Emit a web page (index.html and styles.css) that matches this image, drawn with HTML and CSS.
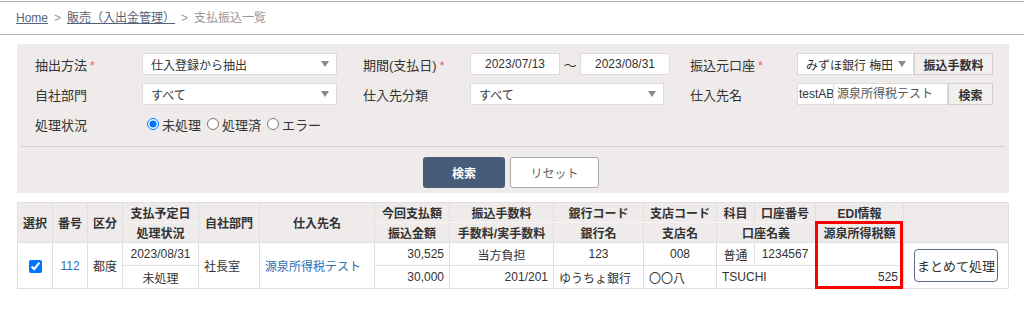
FILE: index.html
```html
<!DOCTYPE html>
<html lang="ja">
<head>
<meta charset="utf-8">
<title>支払振込一覧</title>
<link rel="stylesheet" href="styles.css">
</head>
<body>
<div class="topline"></div>
<nav class="breadcrumb">
  <a href="#">Home</a><span class="sep">&gt;</span><a href="#">販売（入出金管理）</a><span class="sep">&gt;</span><span class="current">支払振込一覧</span>
</nav>

<section class="search-panel">
  <div class="form-grid">
    <div class="lbl">抽出方法<span class="req">*</span></div>
    <div class="field"><div class="select w-main"><span class="val">仕入登録から抽出</span><i class="arrow"></i></div></div>

    <div class="lbl">期間(支払日)<span class="req">*</span></div>
    <div class="field"><div class="input date">2023/07/13</div><span class="tilde">〜</span><div class="input date">2023/08/31</div></div>

    <div class="lbl">振込元口座<span class="req">*</span></div>
    <div class="field"><div class="select bank"><span class="val">みずほ銀行 梅田支店</span><i class="arrow"></i></div><button class="btn-sm fee">振込手数料</button></div>

    <div class="lbl">自社部門</div>
    <div class="field"><div class="select w-main"><span class="val">すべて</span><i class="arrow"></i></div></div>

    <div class="lbl">仕入先分類</div>
    <div class="field"><div class="select w-cat"><span class="val">すべて</span><i class="arrow"></i></div></div>

    <div class="lbl">仕入先名</div>
    <div class="field"><div class="input code">testAB</div><div class="input name">源泉所得税テスト</div><button class="btn-sm find">検索</button></div>

    <div class="lbl">処理状況</div>
    <div class="field radios">
      <label class="radio"><input type="radio" name="st" checked>未処理</label>
      <label class="radio"><input type="radio" name="st">処理済</label>
      <label class="radio"><input type="radio" name="st">エラー</label>
    </div>
  </div>
  <div class="divider"></div>
  <div class="actions">
    <button class="btn-search">検索</button>
    <button class="btn-reset">リセット</button>
  </div>
</section>

<div class="table-wrap">
  <table class="list">
    <colgroup>
      <col class="cw35"><col class="cw35"><col class="cw35"><col class="cw76"><col class="cw61"><col class="cw115"><col class="cw75"><col class="cw104"><col class="cw90"><col class="cw73"><col class="cw38"><col class="cw61"><col class="cw88"><col class="cw105">
    </colgroup>
    <thead>
      <tr>
        <th rowspan="2">選択</th>
        <th rowspan="2">番号</th>
        <th rowspan="2">区分</th>
        <th class="top">支払予定日</th>
        <th rowspan="2">自社部門</th>
        <th rowspan="2">仕入先名</th>
        <th class="top">今回支払額</th>
        <th class="top">振込手数料</th>
        <th class="top">銀行コード</th>
        <th class="top">支店コード</th>
        <th class="top">科目</th>
        <th class="top">口座番号</th>
        <th class="top">EDI情報</th>
        <th rowspan="2"></th>
      </tr>
      <tr>
        <th>処理状況</th>
        <th>振込金額</th>
        <th>手数料/実手数料</th>
        <th>銀行名</th>
        <th>支店名</th>
        <th colspan="2">口座名義</th>
        <th>源泉所得税額</th>
      </tr>
    </thead>
    <tbody>
      <tr>
        <td rowspan="2" class="c"><input type="checkbox" checked class="chk"></td>
        <td rowspan="2" class="c"><a href="#" class="link">112</a></td>
        <td rowspan="2" class="c">都度</td>
        <td class="c">2023/08/31</td>
        <td rowspan="2">社長室</td>
        <td rowspan="2"><a href="#" class="link">源泉所得税テスト</a></td>
        <td class="r">30,525</td>
        <td class="c">当方負担</td>
        <td class="c">123</td>
        <td class="c">008</td>
        <td class="c">普通</td>
        <td class="c">1234567</td>
        <td class="r"></td>
        <td rowspan="2" class="c"><button class="btn-bulk">まとめて処理</button></td>
      </tr>
      <tr>
        <td class="c">未処理</td>
        <td class="r">30,000</td>
        <td class="r">201/201</td>
        <td>ゆうちょ銀行</td>
        <td>〇〇八</td>
        <td colspan="2">TSUCHI</td>
        <td class="r">525</td>
      </tr>
    </tbody>
  </table>
  <div class="highlight"></div>
</div>
</body>
</html>
```

FILE: styles.css
```css
* { box-sizing: border-box; }

body {
  margin: 0;
  font-family: "Liberation Sans", "Noto Sans CJK JP", sans-serif;
  font-size: 12px;
  color: #333;
  background: #fff;
}

.topline {
  height: 1px;
  margin-top: 1px;
  background: #b3b3b3;
}

.breadcrumb {
  height: 33px;
  line-height: 32px;
  padding-left: 16px;
  border-bottom: 1px solid #b3b3b3;
  font-size: 12px;
}
.breadcrumb a {
  color: #56627a;
  text-decoration: underline;
}
.breadcrumb .sep {
  color: #999;
  margin: 0 6px;
}
.breadcrumb .current { color: #999; }

/* search panel */
.search-panel {
  margin: 9px 15px 0 17px;
  background: #efebea;
  padding: 9px 0 5px;
}

.form-grid {
  display: grid;
  grid-template-columns: 107px 221px 107px 220px 107px auto;
  grid-auto-rows: 22px;
  row-gap: 8px;
  padding: 0 18px;
  align-items: center;
}

.lbl {
  font-size: 13px;
  color: #333;
  white-space: nowrap;
}
.req {
  color: #e35b5b;
  margin-left: 3px;
  font-size: 12px;
}

.field {
  display: flex;
  align-items: center;
  height: 22px;
}

.select {
  display: flex;
  align-items: center;
  height: 22px;
  border: 1px solid #dcdcdc;
  background: #fff;
  padding: 0 7px 0 8px;
  font-size: 12px;
}
.select .val {
  flex: 1;
  overflow: hidden;
  white-space: nowrap;
}
.arrow {
  width: 0;
  height: 0;
  border-left: 4px solid transparent;
  border-right: 4px solid transparent;
  border-top: 6px solid #8a8a8a;
  margin-left: 6px;
}
.w-main { width: 195px; }
.w-cat { width: 194px; }
.bank { width: 117px; }

.input {
  height: 22px;
  border: 1px solid #dcdcdc;
  background: #fff;
  line-height: 20px;
  font-size: 12px;
  white-space: nowrap;
  overflow: hidden;
}
.date { width: 90px; text-align: center; }
.tilde {
  width: 20px;
  text-align: center;
  font-size: 13px;
}
.code { width: 37px; padding-left: 1px; }
.name { width: 114px; padding-left: 3px; border-left: none; color: #555; }

.btn-sm {
  height: 22px;
  border: 1px solid #d2d0cf;
  background: #f2f0ef;
  font-family: inherit;
  font-size: 12px;
  font-weight: bold;
  color: #333;
  padding: 0;
}
.fee { width: 79px; }
.find { width: 45px; }

.radios { font-size: 13px; }
.radio {
  display: inline-flex;
  align-items: center;
  margin-right: 1px;
}
.radio input {
  margin: 0 3px 0 5px;
  width: 12px;
  height: 12px;
}

.divider {
  border-top: 1px solid #d3d0cf;
  margin: 11px 4px 0;
}

.actions {
  display: flex;
  justify-content: center;
  gap: 5px;
  margin-top: 10px;
  padding-right: 4px;
}
.btn-search {
  width: 82px;
  height: 31px;
  border: none;
  border-radius: 3px;
  background: #465c78;
  color: #fff;
  font-family: inherit;
  font-size: 12px;
  font-weight: bold;
}
.btn-reset {
  width: 89px;
  height: 31px;
  border: 1px solid #a9a9a9;
  border-radius: 3px;
  background: #fff;
  color: #666;
  font-family: inherit;
  font-size: 12px;
}

/* table */
.table-wrap {
  position: relative;
  margin: 9px 0 0 17px;
  width: 992px;
}

.list {
  border-collapse: collapse;
  table-layout: fixed;
  width: 991px;
}
.cw35 { width: 35px; }
.cw76 { width: 76px; }
.cw61 { width: 61px; }
.cw115 { width: 115px; }
.cw75 { width: 75px; }
.cw104 { width: 104px; }
.cw90 { width: 90px; }
.cw73 { width: 73px; }
.cw38 { width: 38px; }
.cw88 { width: 88px; }
.cw105 { width: 105px; }

.list th,
.list td {
  border: 1px solid #e0dede;
  padding: 0 5px;
  white-space: nowrap;
  overflow: hidden;
}
.list th {
  background: #efebea;
  font-size: 12px;
  font-weight: bold;
  color: #333;
  text-align: center;
}
.list th.top { border-bottom-color: #f7f5f5; }
.list thead tr { height: 20px; }
.list tbody tr { height: 23px; }
.list td { font-size: 12px; }
.list td.c { text-align: center; }
.list td.r { text-align: right; }

.link {
  color: #2f6db5;
  text-decoration: none;
}

.chk {
  margin: 0;
  width: 13px;
  height: 13px;
  vertical-align: middle;
}

.btn-bulk {
  width: 84px;
  height: 33px;
  border: 1px solid #5c6c82;
  border-radius: 4px;
  background: #fff;
  color: #333;
  font-family: inherit;
  font-size: 13px;
  padding: 0;
}

.highlight {
  position: absolute;
  left: 798px;
  top: 19px;
  width: 88px;
  height: 68px;
  border: 3px solid #ff0000;
  pointer-events: none;
}
```
